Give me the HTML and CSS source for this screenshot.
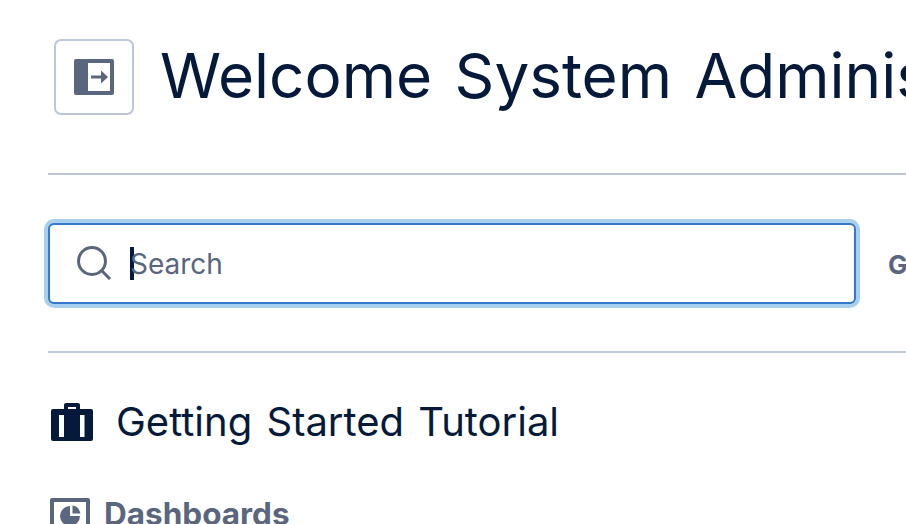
FILE: index.html
```html
<!DOCTYPE html>
<html lang="en">
<head>
<meta charset="utf-8">
<title>Welcome</title>
<link rel="stylesheet" href="styles.css">
</head>
<body>
<div class="page">
  <header class="header">
    <button class="toggle" type="button" aria-label="Toggle sidebar">
      <svg width="40" height="36" viewBox="0 0 40 36"><path fill="#5a667d" fill-rule="evenodd" d="M2 0h36a2 2 0 0 1 2 2v32a2 2 0 0 1-2 2H2a2 2 0 0 1-2-2V2a2 2 0 0 1 2-2zM14 4v28h22V4z"/><path fill="#5a667d" d="M17 16.500h10V11.500l7 6.500-7 6.500V19.500H17z"/></svg>
    </button>
    <h1 class="title">Welcome System Administrator</h1>
  </header>
  <div class="search-row">
    <div class="search">
      <svg class="search-icon" width="36" height="36" viewBox="0 0 36 36"><circle cx="16" cy="16" r="13.500" fill="none" stroke="#5a667d" stroke-width="3"/><path d="M25.500 25.500L34 34" stroke="#5a667d" stroke-width="3" fill="none"/></svg>
      <span class="caret"></span>
      <span class="placeholder">Search</span>
    </div>
    <span class="go">Go</span>
  </div>
  <a class="tutorial">
    <svg width="42" height="38" viewBox="0 0 42 38"><path fill="#051a3a" fill-rule="evenodd" d="M13 6V2a2 2 0 0 1 2-2h12a2 2 0 0 1 2 2v4h11a2 2 0 0 1 2 2v28a2 2 0 0 1-2 2H2a2 2 0 0 1-2-2V8a2 2 0 0 1 2-2zM17 4v2h8V4zM8 12v22h5V12zM29 12v22h4.500V12z"/></svg>
    <span>Getting Started Tutorial</span>
  </a>
  <div class="section">
    <svg class="section-icon" width="40" height="36" viewBox="0 0 40 36"><path fill="#5a667d" fill-rule="evenodd" d="M2 0h36a2 2 0 0 1 2 2v32a2 2 0 0 1-2 2H2a2 2 0 0 1-2-2V2a2 2 0 0 1 2-2zM4 4v28h32V4z"/><path fill="#5a667d" fill-rule="evenodd" d="M20 8a10 10 0 1 0 10 10H20zM22.500 7.500v8h8a10 10 0 0 0-8-8z"/></svg>
    <span>Dashboards</span>
  </div>
</div>
</body>
</html>
```
FILE: styles.css
```css
html, body {
  margin: 0;
  height: 100%;
  overflow: hidden;
  background: #fff;
}
.page {
  width: 1000px;
  padding-left: 48px;
  font-family: Inter, "Liberation Sans", sans-serif;
  color: #051a3a;
}
.header {
  display: flex;
  align-items: center;
  gap: 26px;
  height: 175px;
  padding-left: 6px;
  box-sizing: border-box;
  border-bottom: 2px solid #bcc6d6;
  width: 858px;
  overflow: hidden;
  white-space: nowrap;
}
.toggle {
  width: 80px;
  height: 76px;
  flex: none;
  box-sizing: border-box;
  margin-bottom: 19px;
  padding: 0;
  display: flex;
  align-items: center;
  justify-content: center;
  background: #fff;
  border: 2px solid #bcc6d6;
  border-radius: 7px;
}
.title {
  margin: 0 0 22px;
  font-size: 62px;
  font-weight: 400;
  line-height: 76px;
  word-spacing: 5px;
}
.search-row {
  display: flex;
  align-items: center;
  gap: 32px;
  width: 858px;
  height: 178px;
  box-sizing: border-box;
  border-bottom: 2px solid #bcc6d6;
  white-space: nowrap;
}
.search {
  width: 808px;
  height: 81px;
  flex: none;
  box-sizing: border-box;
  display: flex;
  align-items: center;
  padding-left: 26px;
  background: #fff;
  border: 2px solid #3578c8;
  border-radius: 6px;
  box-shadow: 0 0 0 4px #a8d0ee;
}
.search-icon { flex: none; }
.caret {
  width: 4px;
  height: 33px;
  margin-left: 18px;
  background: #051a3a;
}
.placeholder {
  font-size: 28px;
  line-height: 34px;
  margin: 2px 0 0 -4px;
  color: #5a667d;
}
.go {
  margin-top: 2px;
  font-size: 26px;
  font-weight: 700;
  color: #5a667d;
}
.tutorial {
  display: flex;
  align-items: center;
  gap: 23px;
  margin-top: 46px;
  padding-left: 3px;
  font-size: 40px;
  line-height: 46px;
  word-spacing: 3px;
  white-space: nowrap;
}
.section {
  display: flex;
  align-items: flex-start;
  gap: 14px;
  margin-top: 51px;
  padding-left: 2px;
  font-size: 31.500px;
  font-weight: 700;
  line-height: 36px;
  color: #5a667d;
}
.section-icon {
  flex: none;
  margin-top: 2px;
}
```
